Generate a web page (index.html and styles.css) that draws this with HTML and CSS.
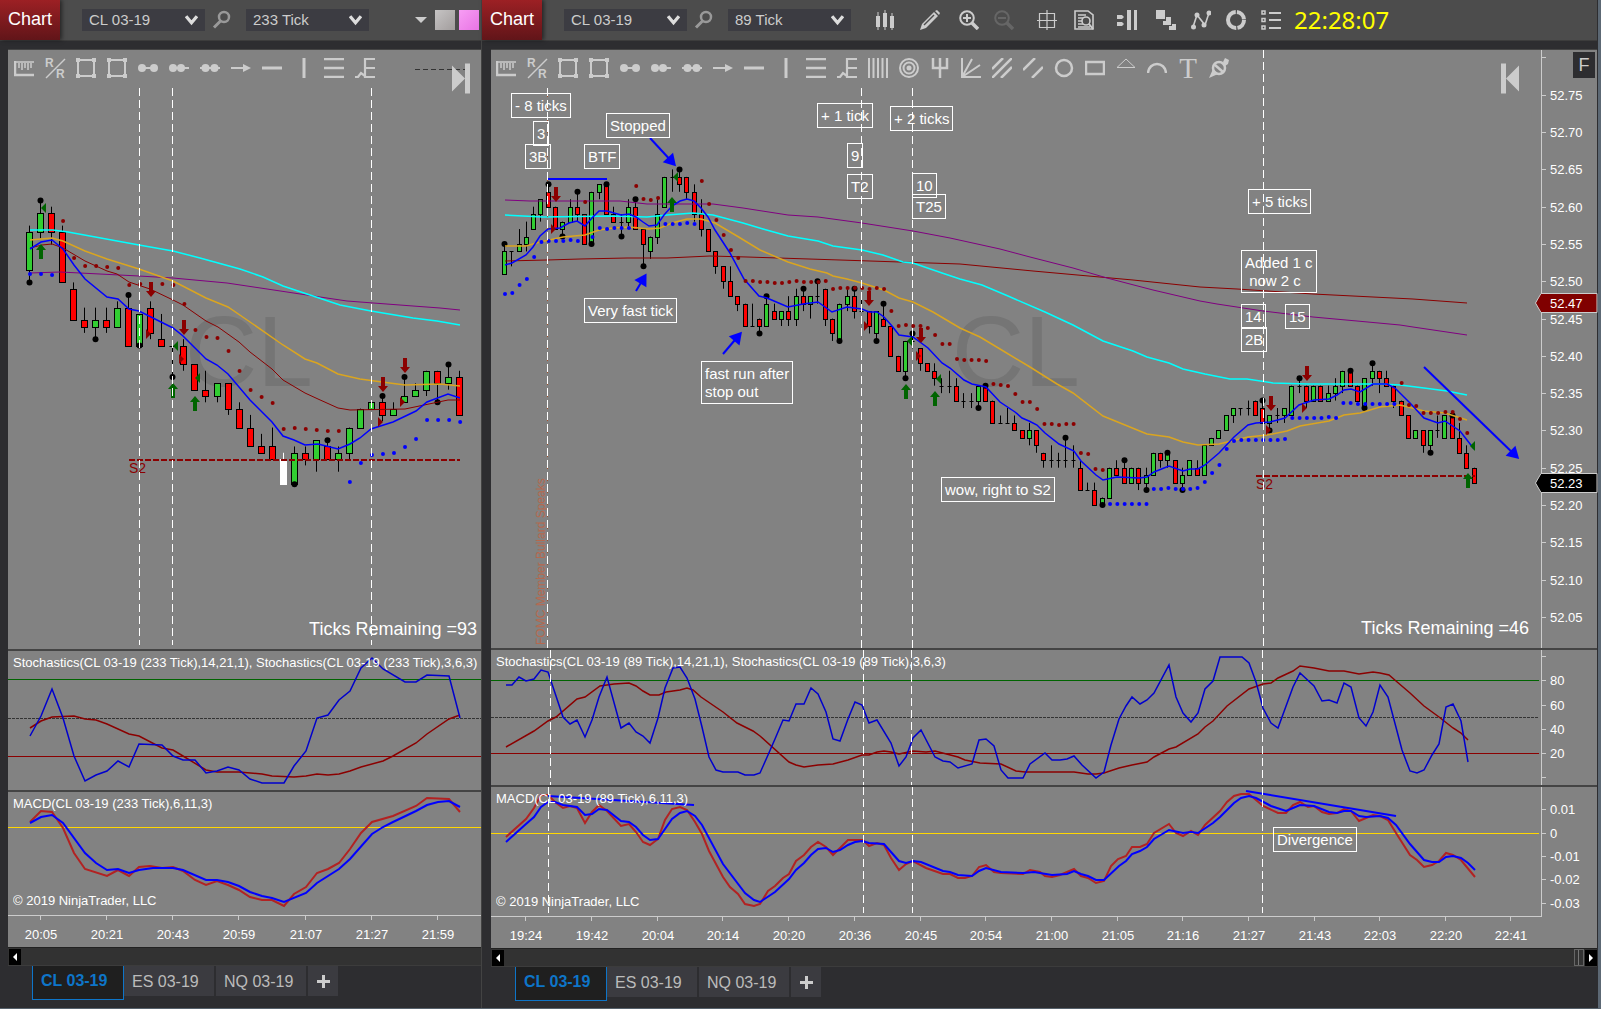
FILE: index.html
```html
<!DOCTYPE html>
<html lang="en">
<head>
    <meta charset="UTF-8">
    <meta name="viewport" content="width=device-width, initial-scale=1.0">
    <title>Chart - CL 03-19</title>
    <link rel="stylesheet" href="styles.css">
</head>
<body>

<!-- Icon set, 20x20 grid -->
<svg class="sprite" aria-hidden="true">
    <symbol id="i-chevron" viewBox="0 0 12 10"><path d="M1 1l5 6 5-6" fill="none" stroke="currentColor" stroke-width="3"/></symbol>
    <symbol id="i-search" viewBox="0 0 20 20"><circle cx="12" cy="7" r="5" fill="none" stroke="currentColor" stroke-width="2.5"/><path d="M8.500 11L2 17.500" stroke="currentColor" stroke-width="3"/></symbol>
    <symbol id="i-ruler" viewBox="0 0 20 20"><path d="M20 4H1v13h19M5 5v5M8 5v7M11 5v5M14 5v7M17 5v5" fill="none" stroke="currentColor" stroke-width="1.500"/><path d="M1 3v14h19" fill="none" stroke="currentColor" stroke-width="2.500"/></symbol>
    <symbol id="i-region" viewBox="0 0 20 20"><path d="M2 2h16v16H2z" fill="none" stroke="currentColor" stroke-width="2"/><path d="M0 0h4v4H0zM16 0h4v4h-4zM0 16h4v4H0zM16 16h4v4h-4z" fill="currentColor"/></symbol>
    <symbol id="i-line" viewBox="0 0 20 20"><path d="M4 10h12" stroke="currentColor" stroke-width="2"/><circle cx="4" cy="10" r="4" fill="currentColor"/><circle cx="16" cy="10" r="4" fill="currentColor"/></symbol>
    <symbol id="i-ray" viewBox="0 0 20 20"><path d="M4 10h16" stroke="currentColor" stroke-width="2"/><circle cx="4" cy="10" r="4" fill="currentColor"/><circle cx="12" cy="10" r="4" fill="currentColor"/></symbol>
    <symbol id="i-extended" viewBox="0 0 20 20"><path d="M0 10h20" stroke="currentColor" stroke-width="2"/><circle cx="5.500" cy="10" r="4" fill="currentColor"/><circle cx="14.500" cy="10" r="4" fill="currentColor"/></symbol>
    <symbol id="i-arrow" viewBox="0 0 20 20"><path d="M0 10h14" stroke="currentColor" stroke-width="2"/><path d="M12 6l8 4-8 4z" fill="currentColor"/></symbol>
    <symbol id="i-horizontal" viewBox="0 0 20 20"><path d="M0 10h20" stroke="currentColor" stroke-width="3"/></symbol>
    <symbol id="i-vertical" viewBox="0 0 20 20"><path d="M11 0v20" stroke="currentColor" stroke-width="3"/></symbol>
    <symbol id="i-retracement" viewBox="0 0 20 20"><path d="M0 1h20M0 10h20M0 19h20" stroke="currentColor" stroke-width="2.500"/></symbol>
    <symbol id="i-extension" viewBox="0 0 20 20"><path d="M20 1H10v18h10M10 10h10M0 19h3l3-4 4 3" fill="none" stroke="currentColor" stroke-width="2.200"/></symbol>
    <symbol id="i-cycles" viewBox="0 0 20 20"><path d="M1 0v20M5.500 0v20M10 0v20M14.500 0v20M19 0v20" stroke="currentColor" stroke-width="2"/></symbol>
    <symbol id="i-circles" viewBox="0 0 20 20"><g fill="none" stroke="currentColor" stroke-width="2"><circle cx="10" cy="10" r="9"/><circle cx="10" cy="10" r="5.500"/></g><circle cx="10" cy="10" r="2.500" fill="currentColor"/></symbol>
    <symbol id="i-pitchfork" viewBox="0 0 20 20"><path d="M3 0v10h14V0M10 0v20" fill="none" stroke="currentColor" stroke-width="2.500"/></symbol>
    <symbol id="i-fan" viewBox="0 0 20 20"><path d="M1 0v19h19M1 19L11 1M1 19L19 7" fill="none" stroke="currentColor" stroke-width="2"/></symbol>
    <symbol id="i-channel" viewBox="0 0 20 20"><path d="M0 11L11 0M0 20L20 0M9 20l11-11" stroke="currentColor" stroke-width="2.500"/></symbol>
    <symbol id="i-regression" viewBox="0 0 20 20"><path d="M0 12L12 0M9 20L20 9" stroke="currentColor" stroke-width="2.500"/></symbol>
    <symbol id="i-ellipse" viewBox="0 0 20 20"><circle cx="10" cy="10" r="8" fill="none" stroke="currentColor" stroke-width="2.500"/></symbol>
    <symbol id="i-rectangle" viewBox="0 0 20 20"><path d="M1 4h18v12H1z" fill="none" stroke="currentColor" stroke-width="2.500"/></symbol>
    <symbol id="i-triangle" viewBox="0 0 20 20"><path d="M1 9.500L10 1l9 8.500z" fill="none" stroke="currentColor"/></symbol>
    <symbol id="i-arc" viewBox="0 0 20 20"><path d="M1 15C2 3 18 3 19 15" fill="none" stroke="currentColor" stroke-width="2.500"/></symbol>
    <symbol id="i-marker" viewBox="0 0 20 20"><circle cx="10" cy="10" r="6" fill="none" stroke="currentColor" stroke-width="2.500"/><path d="M6 7l8 7" stroke="currentColor" stroke-width="2.500"/><path d="M4 11l-4 9 9-4zM14 4l2-4 4 2-1 4-3 2z" fill="currentColor"/></symbol>
    <symbol id="i-candles" viewBox="0 0 20 20"><path d="M3 2v18M10 0v20M17 3v17" stroke="currentColor"/><path d="M1 6h4v11H1zM8 3h4v14H8zM15 6h4v12h-4z" fill="currentColor"/></symbol>
    <symbol id="i-pencil" viewBox="0 0 20 20"><path d="M0 20l2-6L14 2l4 4L6 18z" fill="currentColor"/><path d="M15 1l2-1 3 3-1 2z" fill="currentColor"/><path d="M4 15L14 5" stroke="#4c4c4c" stroke-width="1.500"/></symbol>
    <symbol id="i-zoom-in" viewBox="0 0 20 20"><circle cx="8" cy="8" r="6.800" fill="none" stroke="currentColor" stroke-width="2"/><path d="M8 4v8M4 8h8" stroke="currentColor" stroke-width="2"/><path d="M13 13l6 6" stroke="currentColor" stroke-width="3.500"/></symbol>
    <symbol id="i-zoom-out" viewBox="0 0 20 20"><circle cx="8" cy="8" r="6.800" fill="none" stroke="currentColor" stroke-width="2"/><path d="M4 8h8" stroke="currentColor" stroke-width="2"/><path d="M13 13l6 6" stroke="currentColor" stroke-width="3.500"/></symbol>
    <symbol id="i-crosshair" viewBox="0 0 20 20"><path d="M10 0v20M0 10.500h20M2.500 3.500h15v14h-15z" fill="none" stroke="currentColor" stroke-width="1.200"/></symbol>
    <symbol id="i-data" viewBox="0 0 20 20"><path d="M1 1h13l5 4v14H1zM4 5h8M4 8h5M4 11h4M4 14h5M4 17h12" fill="none" stroke="currentColor" stroke-width="1.600"/><circle cx="12" cy="11" r="4" fill="#4c4c4c" stroke="currentColor" stroke-width="1.600"/><path d="M15 14l4 5" stroke="currentColor" stroke-width="2"/></symbol>
    <symbol id="i-trader" viewBox="0 0 20 20"><path d="M0 5h5l2 2-2 2H0zM0 12h5l2 2-2 2H0zM10 0h4v20h-4zM17 0h3v20h-3z" fill="currentColor"/></symbol>
    <symbol id="i-strategy" viewBox="0 0 20 20"><path d="M0 0h9v9H0zM10 7v4H7v4h8V7zM16 14v2h-3v4h7v-6z" fill="currentColor"/></symbol>
    <symbol id="i-indicators" viewBox="0 0 20 20"><path d="M2 17L6 5l8 10 4-12" fill="none" stroke="currentColor" stroke-width="1.600"/><g fill="currentColor"><circle cx="2.500" cy="17" r="2.500"/><circle cx="6" cy="5" r="2.500"/><circle cx="13" cy="15" r="2.500"/><circle cx="18" cy="3" r="2.500"/></g></symbol>
    <symbol id="i-ring" viewBox="0 0 20 20"><circle cx="10" cy="10" r="8" fill="none" stroke="currentColor" stroke-width="4" stroke-dasharray="11 1.200 25 1.200 11 1"/></symbol>
    <symbol id="i-properties" viewBox="0 0 20 20"><path d="M1 1h3v3H1zM1 8.500h3v3H1zM1 16h3v3H1z" fill="none" stroke="currentColor" stroke-width="1.500"/><path d="M8 3h12M8 10h12M8 18h12" stroke="currentColor" stroke-width="1.800"/></symbol>
    <symbol id="i-end" viewBox="0 0 20 30"><path d="M1 2l13 13L1 28zM14 0h5v30h-5z" fill="currentColor"/></symbol>
    <symbol id="i-start" viewBox="0 0 20 30"><path d="M19 2L6 15l13 13zM1 0h5v30H1z" fill="currentColor"/></symbol>
</svg>

<main class="workspace">

    <section class="window window-left">
        <header class="titlebar">
            <h1 class="title">Chart</h1>
            <div class="select">
                <select aria-label="Instrument"><option>CL 03-19</option></select>
                <svg class="chevron"><use href="#i-chevron"/></svg>
            </div>
            <button class="tool search" aria-label="Search"><svg><use href="#i-search"/></svg></button>
            <div class="select">
                <select aria-label="Interval"><option>233 Tick</option></select>
                <svg class="chevron"><use href="#i-chevron"/></svg>
            </div>
            <div class="links">
                <span class="caret"></span>
                <button class="swatch swatch-gray" aria-label="Instrument link"></button>
                <button class="swatch swatch-pink" aria-label="Interval link"></button>
            </div>
        </header>
        <div class="chart">
            <div class="drawbar">
                <button class="tool" aria-label="Ruler"><svg><use href="#i-ruler"/></svg></button>
                <button class="tool" aria-label="Risk reward"><svg viewBox="0 0 20 20"><text class="icon-r" x="0" y="9">R</text><text class="icon-r" x="11" y="20">R</text><path d="M20 1L1 20" stroke="currentColor" stroke-width="1.500"/></svg></button>
                <button class="tool" aria-label="Region X"><svg><use href="#i-region"/></svg></button>
                <button class="tool" aria-label="Region Y"><svg><use href="#i-region"/></svg></button>
                <button class="tool" aria-label="Line"><svg><use href="#i-line"/></svg></button>
                <button class="tool" aria-label="Ray"><svg><use href="#i-ray"/></svg></button>
                <button class="tool" aria-label="Extended line"><svg><use href="#i-extended"/></svg></button>
                <button class="tool" aria-label="Arrow line"><svg><use href="#i-arrow"/></svg></button>
                <button class="tool" aria-label="Horizontal line"><svg><use href="#i-horizontal"/></svg></button>
                <button class="tool" aria-label="Vertical line"><svg><use href="#i-vertical"/></svg></button>
                <button class="tool" aria-label="Retracements"><svg><use href="#i-retracement"/></svg></button>
                <button class="tool" aria-label="Extensions"><svg><use href="#i-extension"/></svg></button>
            </div>
            <button class="jump" aria-label="Go to last bar"><svg><use href="#i-end"/></svg></button>
            <div class="panel panel-price"><svg class="plot" id="price233"></svg><p class="remaining">Ticks Remaining =93</p></div>
            <div class="panel panel-stoch"><svg class="plot" id="stoch233"></svg><p class="caption">Stochastics(CL 03-19 (233 Tick),14,21,1), Stochastics(CL 03-19 (233 Tick),3,6,3)</p></div>
            <div class="panel panel-macd"><svg class="plot" id="macd233"></svg><p class="caption">MACD(CL 03-19 (233 Tick),6,11,3)</p><p class="copyright">© 2019 NinjaTrader, LLC</p></div>
            <div class="panel panel-time"><svg class="plot" id="time233"></svg></div>
        </div>
        <div class="scrollbar"><button class="scroll-btn" aria-label="Scroll left"><span class="tri-left"></span></button></div>
        <nav class="tabs">
            <button class="tab active">CL 03-19</button>
            <button class="tab">ES 03-19</button>
            <button class="tab">NQ 03-19</button>
            <button class="tab add" aria-label="Add tab"></button>
        </nav>
    </section>

    <section class="window window-right">
        <header class="titlebar">
            <h1 class="title">Chart</h1>
            <div class="select">
                <select aria-label="Instrument"><option>CL 03-19</option></select>
                <svg class="chevron"><use href="#i-chevron"/></svg>
            </div>
            <button class="tool search" aria-label="Search"><svg><use href="#i-search"/></svg></button>
            <div class="select">
                <select aria-label="Interval"><option>89 Tick</option></select>
                <svg class="chevron"><use href="#i-chevron"/></svg>
            </div>
            <div class="actions">
                <button class="tool" aria-label="Bar type"><svg><use href="#i-candles"/></svg></button>
                <button class="tool pencil" aria-label="Drawing tools"><svg><use href="#i-pencil"/></svg></button>
                <button class="tool" aria-label="Zoom in"><svg><use href="#i-zoom-in"/></svg></button>
                <button class="tool" aria-label="Zoom out" disabled><svg><use href="#i-zoom-out"/></svg></button>
                <button class="tool crosshair" aria-label="Cross hair"><svg><use href="#i-crosshair"/></svg></button>
                <button class="tool" aria-label="Data box"><svg><use href="#i-data"/></svg></button>
                <button class="tool trader" aria-label="Chart trader"><svg><use href="#i-trader"/></svg></button>
                <button class="tool" aria-label="Strategies"><svg><use href="#i-strategy"/></svg></button>
                <button class="tool" aria-label="Indicators"><svg><use href="#i-indicators"/></svg></button>
                <button class="tool" aria-label="Reload"><svg><use href="#i-ring"/></svg></button>
                <button class="tool" aria-label="Properties"><svg><use href="#i-properties"/></svg></button>
            </div>
            <time class="clock">22:28:07</time>
        </header>
        <div class="chart">
            <div class="drawbar">
                <button class="tool" aria-label="Ruler"><svg><use href="#i-ruler"/></svg></button>
                <button class="tool" aria-label="Risk reward"><svg viewBox="0 0 20 20"><text class="icon-r" x="0" y="9">R</text><text class="icon-r" x="11" y="20">R</text><path d="M20 1L1 20" stroke="currentColor" stroke-width="1.500"/></svg></button>
                <button class="tool" aria-label="Region X"><svg><use href="#i-region"/></svg></button>
                <button class="tool" aria-label="Region Y"><svg><use href="#i-region"/></svg></button>
                <button class="tool" aria-label="Line"><svg><use href="#i-line"/></svg></button>
                <button class="tool" aria-label="Ray"><svg><use href="#i-ray"/></svg></button>
                <button class="tool" aria-label="Extended line"><svg><use href="#i-extended"/></svg></button>
                <button class="tool" aria-label="Arrow line"><svg><use href="#i-arrow"/></svg></button>
                <button class="tool" aria-label="Horizontal line"><svg><use href="#i-horizontal"/></svg></button>
                <button class="tool" aria-label="Vertical line"><svg><use href="#i-vertical"/></svg></button>
                <button class="tool" aria-label="Retracements"><svg><use href="#i-retracement"/></svg></button>
                <button class="tool" aria-label="Extensions"><svg><use href="#i-extension"/></svg></button>
                <button class="tool" aria-label="Time extensions"><svg><use href="#i-cycles"/></svg></button>
                <button class="tool" aria-label="Fibonacci circle"><svg><use href="#i-circles"/></svg></button>
                <button class="tool" aria-label="Pitchfork"><svg><use href="#i-pitchfork"/></svg></button>
                <button class="tool" aria-label="Gann fan"><svg><use href="#i-fan"/></svg></button>
                <button class="tool" aria-label="Trend channel"><svg><use href="#i-channel"/></svg></button>
                <button class="tool" aria-label="Regression channel"><svg><use href="#i-regression"/></svg></button>
                <button class="tool" aria-label="Ellipse"><svg><use href="#i-ellipse"/></svg></button>
                <button class="tool" aria-label="Rectangle"><svg><use href="#i-rectangle"/></svg></button>
                <button class="tool" aria-label="Triangle"><svg><use href="#i-triangle"/></svg></button>
                <button class="tool" aria-label="Arc"><svg><use href="#i-arc"/></svg></button>
                <button class="tool" aria-label="Text"><svg viewBox="0 0 20 20"><text class="icon-t" x="10" y="20" text-anchor="middle">T</text></svg></button>
                <button class="tool" aria-label="Chart marker"><svg><use href="#i-marker"/></svg></button>
            </div>
            <button class="jump" aria-label="Go to first bar"><svg><use href="#i-start"/></svg></button>
            <button class="fixed-scale">F</button>
            <div class="panel panel-price"><svg class="plot" id="price89"></svg><svg class="axis" id="axisPrice"></svg><div class="notes" id="notesPrice"></div><p class="remaining">Ticks Remaining =46</p></div>
            <div class="panel panel-stoch"><svg class="plot" id="stoch89"></svg><svg class="axis" id="axisStoch"></svg><p class="caption">Stochastics(CL 03-19 (89 Tick),14,21,1), Stochastics(CL 03-19 (89 Tick),3,6,3)</p></div>
            <div class="panel panel-macd"><svg class="plot" id="macd89"></svg><svg class="axis" id="axisMacd"></svg><div class="notes" id="notesMacd"></div><p class="caption">MACD(CL 03-19 (89 Tick),6,11,3)</p><p class="copyright">© 2019 NinjaTrader, LLC</p></div>
            <div class="panel panel-time"><svg class="plot" id="time89"></svg></div>
        </div>
        <div class="scrollbar">
            <button class="scroll-btn" aria-label="Scroll left"><span class="tri-left"></span></button>
            <span class="thumb"></span>
            <button class="scroll-btn" aria-label="Scroll right"><span class="tri-right"></span></button>
        </div>
        <nav class="tabs">
            <button class="tab active">CL 03-19</button>
            <button class="tab">ES 03-19</button>
            <button class="tab">NQ 03-19</button>
            <button class="tab add" aria-label="Add tab"></button>
        </nav>
    </section>

</main>

<script src="chart.js"></script>
</body>
</html>
```
FILE: styles.css
```css
* {
    box-sizing: border-box;
}
body {
    margin: 0;
    background-color: #2d2d30;
    font-family: "Liberation Sans", Arial, sans-serif;
    color: #fff;
}
h1, p {
    margin: 0;
    font-weight: normal;
}
button, select {
    font-family: inherit;
    margin: 0;
    padding: 0;
    border: none;
    background: none;
    color: inherit;
}
.sprite {
    position: absolute;
    width: 0;
    height: 0;
}
.workspace {
    display: flex;
    height: 100vh;
    border-right: 3px solid #5c6874;
    border-bottom: 1px solid #56616b;
}

/* Windows */
.window {
    display: flex;
    flex-direction: column;
    min-width: 0;
}
.window-left {
    flex: 0 0 482px;
    border-right: 1px solid #434343;
}
.window-right {
    flex: 1;
    padding-right: 1px;
}
.titlebar {
    display: flex;
    align-items: center;
    flex: 0 0 41px;
    background-color: #4c4c4c;
    border-bottom: 1px solid #3c3c3c;
}
.title {
    width: 60px;
    height: 40px;
    line-height: 39px;
    padding-left: 8px;
    font-size: 18px;
    background: linear-gradient(#9c2024, #611519);
    box-shadow: 2px 0 4px rgba(0, 0, 0, 0.5);
}
.select {
    position: relative;
    width: 123px;
    height: 22px;
    margin-left: 22px;
}
.select select {
    width: 100%;
    height: 22px;
    padding-left: 7px;
    padding-bottom: 1px;
    font-size: 15px;
    color: #ccc;
    background-color: #3c3c42;
    appearance: none;
}
.chevron {
    position: absolute;
    right: 7px;
    top: 6px;
    width: 13px;
    height: 11px;
    color: #ddd;
    pointer-events: none;
}
.tool {
    width: 20px;
    height: 20px;
    color: #ccc;
    flex: none;
}
.tool svg, .jump svg {
    display: block;
    width: 100%;
    height: 100%;
    overflow: visible;
}
.tool:disabled {
    color: #666;
}
.search {
    margin-left: 7px;
    color: #999;
}
.search + .select {
    margin-left: 14px;
}
.links {
    display: flex;
    align-items: center;
    gap: 4px;
    margin-left: auto;
    margin-right: 2px;
}
.caret {
    border: 6px solid transparent;
    border-top-color: #ccc;
    border-bottom: none;
    margin-right: 4px;
}
.swatch {
    width: 20px;
    height: 20px;
}
.swatch-gray {
    background: linear-gradient(135deg, #c6c4c4, #a29d9d);
}
.swatch-pink {
    background: linear-gradient(135deg, #f79df4, #e874e4);
}
.actions {
    display: flex;
    gap: 15px;
    margin-left: 24px;
}
.actions .pencil {
    margin-left: 10px;
    margin-right: 4px;
}
.actions .crosshair {
    margin-left: 8px;
    margin-right: 2px;
}
.actions .trader {
    margin-left: 8px;
    margin-right: 4px;
}
.clock {
    margin-left: 13px;
    font-family: "Noto Sans", sans-serif;
    font-size: 24px;
    line-height: 32px;
    color: #ff0;
}

/* Chart area */
.chart {
    position: relative;
    flex: 1;
    display: flex;
    flex-direction: column;
    margin-top: 8px;
    margin-left: 8px;
    border-top: 1px solid #444;
    background-color: #828282;
    min-height: 0;
}
.window-right .chart {
    margin-left: 9px;
}
.drawbar {
    position: absolute;
    z-index: 2;
    top: 8px;
    left: 6px;
    display: flex;
    gap: 11px;
}
.window-right .drawbar {
    left: 5px;
}
.icon-r {
    font-size: 12px;
    font-weight: bold;
    fill: currentColor;
}
.icon-t {
    font-family: "Liberation Serif", serif;
    font-size: 29px;
    fill: currentColor;
}
.jump {
    position: absolute;
    z-index: 2;
    top: 13px;
    right: 10px;
    width: 20px;
    height: 31px;
    color: #ccc;
}
.window-right .jump {
    right: 77px;
}
.fixed-scale {
    position: absolute;
    z-index: 2;
    top: 2px;
    right: 2px;
    width: 22px;
    height: 26px;
    font-size: 18px;
    color: #ccc;
    background-color: #2d2d30;
}
.panel {
    position: relative;
    display: flex;
    min-height: 0;
}
.panel-price {
    flex: 599 1 0;
}
.panel-stoch {
    flex: 139 1 0;
    border-top: 2px solid #444;
}
.panel-macd {
    flex: 123 1 0;
    border-top: 2px solid #444;
}
.window-right .panel-price {
    flex-grow: 598;
}
.window-right .panel-stoch {
    flex-grow: 135;
}
.window-right .panel-macd {
    flex-grow: 129;
}
.panel-time {
    flex: 0 0 33px;
    border-bottom: 1px solid #222;
}
.plot {
    flex: 1;
    min-width: 0;
    height: 100%;
}
.axis {
    flex: none;
    width: 56px;
    height: 100%;
    overflow: visible;
}
.caption, .copyright, .remaining {
    position: absolute;
    white-space: nowrap;
    overflow: hidden;
    font-size: 13px;
    line-height: 16px;
}
.caption {
    top: 4px;
    left: 5px;
    right: 0;
}
.copyright {
    bottom: 6px;
    left: 5px;
}
.remaining {
    right: 4px;
    bottom: 9px;
    font-size: 18px;
    line-height: 22px;
}
.window-right .remaining {
    right: 68px;
}
.note {
    position: absolute;
    padding: 3px 3px 2px;
    border: 1px solid #fff;
    font-size: 15px;
    line-height: 18px;
    white-space: pre;
}

/* Drawn series */
.line {
    fill: none;
    stroke-width: 1.5;
}
.thin {
    fill: none;
    stroke-width: 1;
}
.thick {
    fill: none;
    stroke-width: 2;
}
.blue { stroke: #00f; }
.navy { stroke: #0000cd; }
.cyan { stroke: #00ffff; }
.orange { stroke: #daa520; }
.purple { stroke: #800080; }
.maroon { stroke: #8b0000; }
.firebrick { stroke: #b22222; }
.gold { stroke: #ffd700; }
.green { stroke: #006400; }
.gray { stroke: #333; }
.up { fill: #32cd32; stroke: #000; }
.down { fill: #f00; stroke: #000; }
.hollow { fill: #fff; stroke: #fff; }
.wick { stroke: #000; }
.wick-white { stroke: #fff; }
.pivot { fill: #000; }
.sar-up { fill: #00f; }
.sar-down { fill: #8b0000; }
.sell { fill: #8b0000; }
.buy { fill: #006400; }
.session {
    stroke: #fff;
    stroke-dasharray: 8 4;
}
.news {
    stroke: #a0522d;
    stroke-dasharray: 3 3;
}
.news-text {
    font-size: 12px;
    fill: #b5694f;
}
.level {
    stroke: #8b0000;
    stroke-width: 2;
    stroke-dasharray: 6 2;
}
.level-text {
    font-size: 14px;
    fill: #8b0000;
}
.drawn {
    stroke: #00f;
    stroke-width: 2;
}
.drawn-head {
    fill: #00f;
}
.watermark {
    font-size: 100px;
    fill: #757575;
}
.scale {
    stroke: #ccc;
}
.scale-text {
    font-size: 13px;
    fill: #fff;
}

/* Scrollbar and tabs */
.scrollbar {
    display: flex;
    align-items: center;
    flex: 0 0 18px;
    margin-left: 8px;
    padding: 0 1px;
    background-color: #323232;
    border-bottom: 1px solid #3c3c3c;
}
.window-right .scrollbar {
    margin-left: 9px;
    padding-right: 0;
}
.scroll-btn {
    width: 12px;
    height: 16px;
    background-color: #000;
}
.tri-left, .tri-right {
    display: block;
    width: 0;
    margin: 0 auto;
    border: 4px solid transparent;
}
.tri-left {
    border-right-color: #fff;
    border-left: none;
}
.tri-right {
    border-left-color: #fff;
    border-right: none;
}
.thumb {
    width: 10px;
    height: 17px;
    margin-left: auto;
    margin-right: 1px;
    border: 1px solid #666;
    background: linear-gradient(90deg, #333 3px, #777 3px, #777 4px, #333 4px);
}
.tabs {
    display: flex;
    flex: 0 0 42px;
    gap: 2px;
    padding-left: 32px;
}
.window-right .tabs {
    flex-basis: 41px;
    padding-left: 33px;
}
.tab {
    height: 30px;
    padding: 1px 8px 0;
    width: 90px;
    font-size: 16px;
    text-align: left;
    color: #bbb;
    background-color: #3b3b40;
}
.tab.active {
    width: 92px;
    height: 34px;
    padding-bottom: 4px;
    font-weight: bold;
    color: #0e75c8;
    background-color: #1f1f1f;
    border: 1px solid #0e75c8;
    border-top: none;
    margin-right: -2px;
}
.tab.add {
    width: 30px;
    background: linear-gradient(#ccc, #ccc) center / 13px 3px no-repeat,
                linear-gradient(#ccc, #ccc) center / 3px 13px no-repeat, #3b3b40;
}
```
FILE: chart.js
```js
// Bars: [open, close, high, low, pivot] in cents above 52.00
// pivot: 1 = swing high dot, -1 = swing low dot
const bars89 = [
    [51,54,55,51,1], [54,54,54,52], [54,55,57,54], [55,56,58,54], [57,59,60,57], [59,61,61,58], [62,60,63,60,1], [60,57,60,57],
    [57,58,58,56,-1], [58,60,61,58], [60,59,62,58,1], [59,55,59,55], [55,62,62,55,-1], [62,63,63,61], [63,59,63,59,1], [59,58,60,58],
    [58,58,59,56,-1], [58,60,61,57], [60,57,61,57,1], [57,55,57,52,-1], [54,56,56,53], [56,59,61,55], [60,64,64,60], [64,64,65,62],
    [64,63,65,62,1], [64,62,64,61], [62,59,63,58], [59,57,61,56], [57,54,57,54], [54,52,54,51], [52,50,52,49], [50,48,52,48],
    [48,47,48,46], [47,44,47,44], [44,44,47,44], [45,44,45,43,-1], [44,47,48,44,1], [46,45,47,45], [45,46,46,44], [46,45,48,44],
    [45,48,49,44], [48,47,49,46,1], [47,48,48,45], [48,48,50,47,1], [49,45,49,44], [45,43,45,42], [42,47,47,42,-1], [47,48,49,46],
    [48,46,49,45,1], [46,46,48,46], [46,44,46,43], [43,46,46,42,-1], [45,44,47,44,1], [44,40,44,40], [40,38,40,38], [38,42,42,37,-1],
    [42,42,43,41,1], [41,39,41,38], [39,38,39,38], [38,37,39,36], [36,36,37,35], [36,36,38,35], [36,34,37,34], [34,34,35,33],
    [34,34,35,33], [34,36,36,33,-1], [36,34,36,34,1], [34,31,34,31], [31,31,32,31], [31,31,33,31], [31,30,32,30], [30,29,30,29],
    [29,30,31,28], [30,28,30,27], [27,26,27,25], [26,26,28,25], [26,26,27,25], [26,26,29,25,1], [26,26,28,25], [25,22,26,22],
    [22,22,23,22], [22,20,23,20], [20,21,21,20,-1], [21,25,25,21], [25,24,26,24], [25,23,26,23,1], [23,25,25,23], [25,23,25,22],
    [23,24,25,22,-1], [24,27,27,24], [27,26,27,25], [26,27,27,25,1], [26,23,26,23], [23,24,25,22,-1], [24,26,26,24], [25,24,26,24],
    [24,28,28,24], [28,29,29,28], [29,30,30,29], [30,32,32,30], [32,33,33,31], [33,33,33,32], [33,33,34,32], [34,32,34,32],
    [33,31,34,31,1], [31,32,32,30,-1], [32,32,33,31], [32,33,33,31], [32,36,36,32], [36,36,37,35,1], [36,34,36,33], [34,36,36,34],
    [36,34,36,34], [34,35,36,34], [35,36,37,34], [36,38,38,35], [38,36,38,36,1], [36,34,36,34], [33,37,37,33,-1], [37,38,39,36,1],
    [38,37,38,35], [37,36,38,36], [36,34,36,33], [34,32,34,32], [32,29,32,29], [29,30,30,29], [30,28,30,27], [28,30,30,27,-1],
    [30,30,32,29], [29,32,32,29], [32,29,32,29,1], [29,27,31,27], [27,25,28,25], [25,23,25,23]
];

const bars233 = [
    [54,60,61,52,-1], [60,63,65,59,1], [63,60,64,58], [60,52,61,52], [51,46,52,46], [46,45,48,44], [45,46,48,43,-1], [46,45,48,44],
    [45,48,49,45], [48,42,50,42,1], [42,47,47,42,-1], [48,44,49,43], [43,42,47,42], [42,42,42,37,-1], [42,39,43,38], [39,35,39,35],
    [35,34,38,33], [34,36,36,33], [36,32,36,31], [32,29,33,29], [29,26,31,26], [26,25,28,25], [26,24,29,24], [24,20,25,20],
    [20,25,26,20,-1], [25,24,26,23], [24,27,27,22], [26,24,27,24,1], [24,25,26,22], [25,29,29,24], [29,32,32,29], [32,33,33,32],
    [33,31,34,30,1], [31,32,33,31], [33,34,37,33,1], [34,35,36,34], [35,38,38,34], [38,36,38,33,-1], [36,37,39,35,1], [37,31,38,31]
];

// Parabolic SAR runs: [first bar, y...]
const sar89 = {
    'sar-up': [
        [0, 294,293,285,279,257,242,241,241,241,240,241], [12, 237,228,229,228,228,228], [22, 224,224,224,223,224],
        [83, 504,504,504,504,504,504,489,489,488,489,489,489,488,482,473,465,449,441,440,440,440,440,440,440,439],
        [108, 418,418,418,418,418,417,418,403,403,404,404,404,404,404,404]
    ],
    'sar-down': [
        [11, 202], [18, 186,199,200,198],
        [27, 181,204,220,235,250,258,281,281,282,282,283,283,282,281,282,282,282,281,289,288,288,288,288,289,288,289,311],
        [54, 326,325,326,326,328,335,344,344,359,360,360,360,361,384,385,386,394,402,402,409,424,424,425,424,424,453,454,469,470],
        [123, 383,405,406,413,413,413,412,412,419,433]
    ]
};
const sar233 = {
    'sar-up': [[0, 274,274,275], [29, 482,463,455,454,453,447,439,420,420,420,422]],
    'sar-down': [
        [3, 221,258,266,266,267,268,285,284], [12, 284,285,304,330,337,338,351,371,390,397,403,429,428,429,430,431,431]
    ]
};

const SVG = 'http://www.w3.org/2000/svg';

function add(parent, tag, attrs, text) {
    const el = document.createElementNS(SVG, tag);
    for (const key in attrs) el.setAttribute(key, attrs[key]);
    if (text !== undefined) el.textContent = text;
    parent.appendChild(el);
    return el;
}

// All coordinates are workspace coordinates, shifted to each panel's corner
function layer(id, x, y) {
    return add(document.getElementById(id), 'g', { transform: `translate(${-x} ${-y})` });
}

function line(g, cls, x1, y1, x2, y2) {
    add(g, 'line', { class: cls, x1, y1, x2, y2 });
}

function poly(g, cls, points) {
    add(g, 'polyline', { class: cls, points });
}

function candles(g, bars, x0, step, yOf, half) {
    bars.forEach(([open, close, high, low, pivot], i) => {
        const x = Math.round(x0 + i * step) + 0.5;
        const white = bars === bars233 && i === 23;
        const top = Math.round(yOf(Math.max(open, close))) + 0.5;
        const bottom = Math.round(yOf(Math.min(open, close))) + 0.5;
        line(g, white ? 'wick-white' : 'wick', x, yOf(high), x, yOf(low));
        if (open === close) {
            line(g, 'wick', x - half, top, x + half, top);
        } else {
            const cls = white ? 'hollow' : close > open ? 'up' : 'down';
            add(g, 'rect', { class: cls, x: x - half, y: top, width: half * 2, height: bottom - top });
        }
        if (pivot) add(g, 'circle', { class: 'pivot', cx: x, cy: yOf(pivot > 0 ? high : low), r: 3 });
    });
}

function sar(g, data, x0, step) {
    for (const cls in data) {
        data[cls].forEach(([first, ...ys]) => {
            ys.forEach((y, i) => add(g, 'circle', { class: cls, cx: x0 + (first + i) * step, cy: y, r: 2 }));
        });
    }
}

function downArrow(g, x, y) {
    add(g, 'path', { class: 'sell', d: `M${x - 2} ${y - 15}h4v9h3l-5 6-5-6h3z` });
}
function upArrow(g, x, y) {
    add(g, 'path', { class: 'buy', d: `M${x - 2} ${y + 15}h4v-9h3l-5-6-5 6h3z` });
}
function exitRight(g, x, y) {
    add(g, 'path', { class: 'sell', d: `M${x - 2} ${y - 5}l5 5-5 5z` });
}
function exitLeft(g, x, y) {
    add(g, 'path', { class: 'buy', d: `M${x + 3} ${y - 5}l-5 5 5 5z` });
}

function drawnArrow(g, x1, y1, x2, y2) {
    line(g, 'drawn', x1, y1, x2, y2);
    const a = Math.atan2(y2 - y1, x2 - x1) * 180 / Math.PI;
    add(g, 'path', { class: 'drawn-head', d: 'M3 0L-9 7V-7z', transform: `translate(${x2} ${y2}) rotate(${a})` });
}

function timeAxis(id, x, y, labels) {
    const g = layer(id, x, y);
    labels.forEach(([cx, text]) => {
        line(g, 'scale', cx - 0.5, y, cx - 0.5, y + 5);
        add(g, 'text', { class: 'scale-text', x: cx, y: y + 24, 'text-anchor': 'middle' }, text);
    });
    return g;
}

function notes(id, x, y, list) {
    const box = document.getElementById(id);
    list.forEach(([left, top, text]) => {
        const el = document.createElement('div');
        el.className = 'note';
        el.style.left = (left - x) + 'px';
        el.style.top = (top - y) + 'px';
        el.textContent = text;
        box.appendChild(el);
    });
}

// ---- 233 tick ----
let g = layer('price233', 8, 50);
const y233 = c => 213 + (63 - c) * 6.31;
add(g, 'text', { class: 'watermark', x: 185, y: 386 }, 'CL');
add(g, 'text', { class: 'level-text', x: 129, y: 473 }, 'S2');
line(g, 'gray', 415, 69.5, 465, 69.5);
g.lastChild.setAttribute('stroke-dasharray', '5 3');
candles(g, bars233, 29, 11.03, y233, 3);
poly(g, 'thin purple', '30,273 60,272 80,273 139,276 173,278 227,283 287,292 320,297 347,301 413,306 440,308 460,310');
poly(g, 'line cyan', '30,230 53,230 68,232 139,245 173,251 200,258 240,269 263,277 283,286 310,295 340,305 371,311 413,318 437,321 460,325');
poly(g, 'thin maroon', '30,248 42,245 52,244 63,248 85,261 107,271 117,274 129,282 150,289 173,300 183,305 206,321 218,327 239,342 250,352 272,369 283,380 305,393 318,399 338,408 350,410 405,409 448,400 460,400');
poly(g, 'line orange', '30,240 52,238 63,241 85,251 107,259 139,269 173,281 206,298 228,307 250,322 283,345 305,359 317,363 338,374 360,379 382,382 405,385 440,384 460,386');
poly(g, 'line blue', '30,249 41,242 52,240 63,249 74,265 85,279 107,297 118,299 129,309 139,311 161,322 173,328 183,336 206,359 217,365 228,374 250,400 272,422 283,436 294,440 305,445 318,444 338,449 350,444 360,438 371,429 393,422 416,411 427,402 448,394 460,398');
line(g, 'level', 129, 460, 460, 460);
sar(g, sar233, 30, 11.03);
[[151, 297], [184, 335], [383, 392], [405, 373]].forEach(p => downArrow(g, ...p));
[[41, 244], [173, 383], [195, 396]].forEach(p => upArrow(g, ...p));
[[148, 334], [181, 359], [380, 422], [402, 402]].forEach(p => exitRight(g, ...p));
[[43, 208], [175, 346], [197, 378]].forEach(p => exitLeft(g, ...p));
[139.5, 172.5, 371.5].forEach(x => line(g, 'session', x, 88, x, 645));

g = layer('stoch233', 8, 651);
line(g, 'green', 8, 679.5, 2000, 679.5);
line(g, 'maroon', 8, 756.5, 2000, 756.5);
line(g, 'gray', 8, 718.5, 2000, 718.5);
g.lastChild.setAttribute('stroke-dasharray', '3 1');
poly(g, 'line maroon', '30,728 41,721 52,717 74,716 85,719 96,720 107,724 129,734 139,736 162,748 173,750 183,756 206,770 217,772 239,772 262,774 272,776 294,777 306,776 317,774 328,775 339,774 350,771 361,767 383,761 393,756 416,743 427,734 449,719 460,715');
poly(g, 'line navy', '30,736 41,716 52,689 63,718 74,756 85,781 96,775 107,771 118,761 129,767 139,744 162,745 173,756 183,760 195,760 206,773 217,771 228,767 239,770 250,779 262,783 284,783 294,766 306,751 317,718 328,715 339,700 350,691 361,668 372,658 383,669 405,682 416,682 427,675 449,676 460,718');

g = layer('macd233', 8, 792);
line(g, 'gold', 8, 827.5, 2000, 827.5);
poly(g, 'thick firebrick', '30,822 41,811 52,812 63,828 74,853 85,869 107,876 118,870 129,876 139,867 150,866 162,868 173,867 183,871 195,880 206,885 217,881 228,885 239,890 250,897 262,900 272,900 284,906 294,894 306,887 317,873 328,869 339,863 350,849 361,833 372,822 393,816 416,806 427,798 449,799 460,812');
poly(g, 'thick blue', '30,823 41,817 52,815 63,823 85,853 96,863 107,870 118,869 129,873 139,870 153,868 173,868 183,870 206,880 217,880 228,882 239,886 250,892 262,896 272,898 284,902 306,893 317,883 339,869 350,859 372,834 383,827 393,822 416,811 427,805 438,802 449,801 460,807');

g = timeAxis('time233', 8, 915, [[41, '20:05'], [107, '20:21'], [173, '20:43'], [239, '20:59'], [306, '21:07'], [372, '21:27'], [438, '21:59']]);
line(g, 'scale', 8, 915.5, 2000, 915.5);

// ---- 89 tick ----
g = layer('price89', 491, 50);
const y89 = c => 206.7 + (60 - c) * 7.457;
add(g, 'text', { class: 'watermark', x: 952, y: 386 }, 'CL');
add(g, 'text', { class: 'news-text', transform: 'translate(545 645) rotate(-90)' }, 'FOMC Member Bullard Speaks');
add(g, 'text', { class: 'level-text', x: 1256, y: 489 }, 'S2');
candles(g, bars89, 504, 7.29, y89, 2);
poly(g, 'thin maroon', '505,261 547,260 580,259 627,258 667,258 710,256 747,257 840,260 900,262 960,264 1033,271 1133,280 1200,287 1237,289 1313,294 1413,299 1467,303');
poly(g, 'thin purple', '505,200 530,201 620,201 647,204 713,204 743,208 788,215 818,217 862,223 913,231 950,238 1000,249 1030,257 1073,268 1107,278 1153,290 1200,301 1217,304 1263,311 1313,317 1357,321 1400,325 1413,327 1467,335');
poly(g, 'line cyan', '505,215 543,217 613,216 647,217 667,215 693,213 713,215 743,223 763,229 788,236 818,241 833,246 862,250 883,255 903,262 913,263 942,273 960,279 982,285 1008,296 1045,312 1073,325 1103,341 1133,351 1147,357 1169,363 1183,369 1205,374 1230,379 1247,379 1273,383 1307,384 1380,384 1400,385 1424,388 1447,391 1467,395');
poly(g, 'line orange', '505,246 526,246 540,242 563,237 585,235 599,230 613,228 629,227 649,229 660,228 672,223 687,219 701,219 715,223 737,236 760,250 788,262 810,269 827,273 833,276 847,279 862,283 884,290 899,298 913,302 933,312 960,328 980,337 1000,349 1030,367 1057,384 1073,393 1103,416 1147,434 1169,437 1183,442 1198,445 1219,444 1248,437 1267,435 1287,431 1300,426 1329,421 1344,415 1360,413 1380,407 1400,405 1424,411 1445,413 1467,420');
poly(g, 'line blue', '505,265 512,263 526,255 533,247 540,236 548,229 560,228 569,223 577,221 585,226 592,218 599,211 607,211 621,215 629,214 636,217 643,222 649,226 657,225 664,215 672,206 680,201 687,199 694,201 701,208 708,217 715,230 730,253 744,279 759,296 767,298 774,301 788,307 803,304 818,302 832,312 847,307 862,309 869,312 877,312 884,317 892,326 899,335 913,337 928,348 942,363 950,368 964,380 972,384 986,387 1000,402 1015,412 1022,418 1029,421 1037,425 1045,433 1059,444 1074,451 1081,461 1096,475 1103,480 1117,477 1139,478 1147,477 1154,472 1169,466 1183,471 1190,469 1198,469 1205,465 1219,453 1234,437 1248,425 1256,423 1270,422 1285,418 1299,405 1314,400 1329,399 1337,395 1344,390 1351,389 1360,392 1373,384 1387,384 1395,388 1410,403 1424,418 1438,423 1445,421 1460,431 1474,449');
line(g, 'level', 1256, 476, 1475, 476);
sar(g, sar89, 505, 7.29);
[[556, 202], [869, 306], [921, 343], [1271, 411], [1307, 381]].forEach(p => downArrow(g, ...p));
[[672, 197], [906, 384], [935, 391], [1468, 473]].forEach(p => upArrow(g, ...p));
[[553, 229], [866, 326], [918, 356], [1268, 430], [1304, 408]].forEach(p => exitRight(g, ...p));
[[675, 177], [909, 341], [938, 379], [1472, 446]].forEach(p => exitLeft(g, ...p));
line(g, 'drawn', 548, 179, 607, 179);
drawnArrow(g, 650, 138, 674, 164);
drawnArrow(g, 636, 291, 645, 276);
drawnArrow(g, 723, 354, 740, 334);
drawnArrow(g, 1424, 367, 1517, 457);
line(g, 'news', 547.5, 88, 547.5, 648);
[547.5, 861.5, 912.5].forEach(x => line(g, 'session', x, 88, x, 648));
line(g, 'session', 1263.5, 50, 1263.5, 648);

notes('notesPrice', 491, 50, [
    [511, 93, '- 8 ticks'], [533, 121, '3'], [525, 144, '3B'], [584, 144, 'BTF'], [606, 113, 'Stopped'],
    [817, 103, '+ 1 tick'], [847, 143, '9'], [847, 174, 'T2'], [890, 106, '+ 2 ticks'], [912, 173, '10'], [912, 194, 'T25'],
    [584, 298, 'Very fast tick'], [701, 361, 'fast run after\nstop out'], [941, 477, 'wow, right to S2'],
    [1248, 189, '+ 5 ticks'], [1241, 250, 'Added 1 c\n now 2 c'], [1241, 304, '14'], [1241, 327, '2B'], [1285, 304, '15']
]);

g = layer('stoch89', 491, 650);
line(g, 'green', 491, 680.5, 1539, 680.5);
line(g, 'maroon', 491, 753.5, 1539, 753.5);
line(g, 'gray', 491, 717.5, 1539, 717.5);
g.lastChild.setAttribute('stroke-dasharray', '3 1');
poly(g, 'line maroon', '506,747 534,731 548,721 556,717 577,699 585,697 600,686 614,684 629,683 636,686 643,691 650,695 659,695 666,692 680,690 687,688 693,690 701,697 723,712 737,723 753,731 760,736 789,762 796,765 804,767 818,765 833,764 848,760 862,755 869,755 877,752 884,751 891,752 899,754 913,751 926,752 935,751 958,757 965,760 980,763 1001,764 1016,771 1025,772 1074,772 1088,774 1096,774 1104,773 1119,768 1132,765 1147,762 1154,757 1169,749 1176,747 1198,734 1205,727 1213,721 1227,706 1249,689 1263,684 1271,683 1278,678 1293,671 1300,666 1314,668 1329,671 1344,671 1359,674 1373,672 1380,673 1389,675 1396,681 1410,693 1424,706 1439,717 1453,728 1461,733 1468,740');
poly(g, 'line navy', '506,685 512,685 519,677 526,681 534,679 541,670 548,672 555,693 563,717 570,724 577,720 585,737 592,720 599,697 607,677 621,728 629,723 636,732 643,736 650,743 658,718 665,688 673,668 680,667 687,678 695,699 702,727 709,757 716,770 723,772 738,772 745,775 754,775 760,773 768,755 775,739 783,720 789,721 796,704 804,704 811,688 818,694 826,712 833,739 840,741 848,719 855,702 862,705 869,723 877,720 891,743 899,766 906,757 913,738 921,730 935,757 943,761 950,762 958,768 972,764 979,740 986,739 994,746 1001,770 1008,778 1023,778 1030,764 1045,753 1052,760 1060,760 1067,759 1074,756 1082,765 1096,778 1104,772 1111,745 1119,719 1126,706 1132,697 1140,704 1147,700 1154,693 1169,665 1176,697 1183,713 1191,722 1198,713 1205,689 1213,681 1220,657 1242,657 1249,663 1256,682 1263,708 1271,723 1278,728 1293,687 1300,673 1314,686 1322,701 1329,700 1337,703 1344,683 1351,687 1359,718 1366,726 1373,712 1380,685 1388,697 1402,750 1410,771 1417,773 1424,770 1432,755 1439,744 1446,707 1453,704 1461,721 1468,762');
[550.5, 863.5, 911.5, 1262.5].forEach(x => line(g, 'session', x, 650, x, 785));

g = layer('macd89', 491, 787);
line(g, 'gold', 491, 833.5, 1539, 833.5);
poly(g, 'thick firebrick', '506,837 526,819 534,808 541,795 548,795 555,802 563,808 570,806 577,808 585,823 592,812 599,805 607,811 621,826 629,824 636,832 643,842 650,845 658,839 665,820 672,809 680,807 687,810 695,822 702,834 709,851 723,877 730,887 738,894 745,904 754,906 760,904 768,891 775,886 783,878 789,874 796,861 804,855 811,847 818,842 826,847 833,855 848,840 863,840 869,846 877,843 884,845 891,858 899,870 906,864 913,861 926,868 943,874 950,874 958,878 965,878 972,876 979,867 986,865 994,872 1001,873 1023,874 1030,870 1040,872 1045,876 1052,877 1060,875 1074,869 1081,876 1088,878 1096,883 1104,881 1111,866 1118,859 1126,856 1132,847 1140,847 1147,844 1154,833 1169,824 1176,833 1183,836 1191,831 1198,835 1205,825 1220,811 1227,802 1234,796 1241,794 1249,794 1256,800 1263,806 1278,813 1286,813 1293,805 1300,802 1308,807 1314,806 1322,812 1329,814 1337,813 1344,809 1351,811 1359,821 1366,818 1373,815 1380,816 1388,820 1396,833 1410,855 1417,860 1424,867 1432,865 1439,861 1446,853 1453,855 1461,860 1475,877');
poly(g, 'thick blue', '506,842 526,824 534,817 541,807 548,802 555,802 563,805 577,807 585,815 592,814 599,809 607,810 621,821 629,822 636,827 643,835 650,840 658,839 672,819 680,813 687,811 695,816 702,825 723,864 745,893 754,900 760,902 775,892 789,879 796,870 804,863 811,855 818,849 826,848 833,852 840,850 848,845 855,842 862,841 869,843 884,844 891,852 899,861 906,863 913,861 921,862 943,871 950,872 958,875 972,876 979,871 986,868 1001,872 1023,873 1034,872 1052,875 1067,874 1074,871 1081,874 1088,876 1096,880 1104,880 1119,866 1126,861 1132,854 1140,851 1147,847 1154,839 1169,830 1183,833 1191,832 1198,833 1213,823 1220,817 1234,803 1241,798 1249,796 1256,798 1271,806 1286,811 1293,808 1300,805 1314,806 1329,812 1337,813 1344,811 1351,811 1359,816 1366,817 1380,816 1388,818 1396,825 1410,844 1424,860 1432,862 1439,862 1446,857 1453,856 1461,858 1468,863 1475,870');
line(g, 'drawn', 548, 796, 694, 805);
line(g, 'drawn', 1246, 791, 1396, 816);
[548.5, 863.5, 912.5, 1262.5].forEach(x => line(g, 'session', x, 787, x, 913));
notes('notesMacd', 491, 787, [[1273, 827, 'Divergence']]);

g = timeAxis('time89', 491, 916, [
    [526, '19:24'], [592, '19:42'], [658, '20:04'], [723, '20:14'], [789, '20:20'], [855, '20:36'], [921, '20:45'], [986, '20:54'],
    [1052, '21:00'], [1118, '21:05'], [1183, '21:16'], [1249, '21:27'], [1315, '21:43'], [1380, '22:03'], [1446, '22:20'], [1511, '22:41']
]);
line(g, 'scale', 491, 916.5, 1542, 916.5);

// ---- Value axes ----
function valueAxis(id, y, height, ticks) {
    const a = layer(id, 1541, y);
    line(a, 'scale', 1541.5, y, 1541.5, y + height);
    ticks.forEach(([ty, text]) => {
        line(a, 'scale', 1541, ty + 0.5, 1546, ty + 0.5);
        if (text) add(a, 'text', { class: 'scale-text', x: 1550, y: ty + 5 }, text);
    });
    return a;
}

function priceTag(a, y, color, text) {
    add(a, 'path', { d: `M1597 ${y - 9.5}H1541L1535.5 ${y}L1541 ${y + 9.5}H1597z`, fill: color, stroke: '#ccc' });
    add(a, 'text', { class: 'scale-text', x: 1550, y: y + 5 }, text);
}

const priceTicks = [[57]];
for (let c = 75; c >= 5; c -= 5) {
    priceTicks.push([Math.round(y89(c)), '52.' + String(c).padStart(2, '0')]);
}
const axis = valueAxis('axisPrice', 50, 598, priceTicks);
priceTag(axis, 303, '#800000', '52.47');
priceTag(axis, 483, '#000', '52.23');
valueAxis('axisStoch', 650, 135, [[656], [680, '80'], [705, '60'], [729, '40'], [753, '20'], [777]]);
valueAxis('axisMacd', 787, 129, [[809, '0.01'], [833, '0'], [856, '-0.01'], [879, '-0.02'], [903, '-0.03']]);
```
